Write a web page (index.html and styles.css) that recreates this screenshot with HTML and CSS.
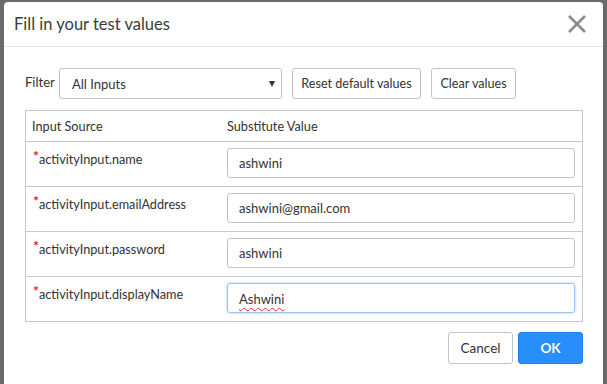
FILE: index.html
```html
<!DOCTYPE html>
<html>
<head>
<meta charset="utf-8">
<link rel="stylesheet" href="styles.css">
</head>
<body>
<div class="modal">
  <div class="modal-header">
    <h1 class="modal-title">Fill in your test values</h1>
    <button class="close" aria-label="Close">
      <svg width="20" height="20" viewBox="0 0 20 20"><path d="M2 2 L18 18 M18 2 L2 18" stroke="#8c8c8c" stroke-width="2.6" fill="none"/></svg>
    </button>
  </div>
  <div class="modal-body">
    <div class="filter-row">
      <label class="filter-label">Filter</label>
      <div class="select-wrap">
        <select class="select"><option>All Inputs</option></select>
      </div>
      <button class="btn btn-reset">Reset default values</button>
      <button class="btn btn-clear">Clear values</button>
    </div>
    <table class="values">
      <thead>
        <tr><th class="col-src">Input Source</th><th>Substitute Value</th></tr>
      </thead>
      <tbody>
        <tr><td class="src"><span class="req">*</span>activityInput.name</td><td class="val"><input class="field" value="ashwini"></td></tr>
        <tr><td class="src"><span class="req">*</span>activityInput.emailAddress</td><td class="val"><input class="field" value="ashwini@gmail.com"></td></tr>
        <tr><td class="src"><span class="req">*</span>activityInput.password</td><td class="val"><input class="field" value="ashwini"></td></tr>
        <tr><td class="src"><span class="req">*</span>activityInput.displayName</td><td class="val"><div class="field focused"><span class="misspelled">Ashwini</span></div></td></tr>
      </tbody>
    </table>
    <div class="footer">
      <button class="btn btn-footer">Cancel</button>
      <button class="btn btn-footer btn-primary">OK</button>
    </div>
  </div>
</div>
</body>
</html>
```
FILE: styles.css
```css
html, body {
  margin: 0;
  padding: 0;
}
body {
  width: 607px;
  height: 384px;
  overflow: hidden;
  background: #6a6a6a;
  font-family: Lato, "Liberation Sans", sans-serif;
  color: #333;
}
.modal {
  margin: 2px 4px 0 4px;
  background: #fff;
  border-radius: 4px;
  height: 400px;
}
.modal-header {
  height: 44px;
  border-bottom: 1px solid #e5e5e5;
  display: flex;
  align-items: center;
  justify-content: space-between;
  padding: 0 16px 0 10px;
}
.modal-title {
  margin: 0;
  font-size: 16.5px;
  font-weight: normal;
  color: #3c3c3c;
}
.close {
  border: 0;
  background: none;
  padding: 0;
  width: 20px;
  height: 20px;
  display: flex;
}
.modal-body {
  padding: 21px 20px 0 21px;
}
.filter-row {
  display: flex;
  align-items: center;
  height: 31px;
}
.filter-label {
  font-size: 13px;
  width: 34px;
  color: #333;
  margin-bottom: 3px;
}
.select-wrap {
  position: relative;
  width: 223px;
  height: 31px;
  margin-right: 10px;
}
.select-wrap::after {
  content: "";
  position: absolute;
  right: 7px;
  top: 13px;
  border-left: 3.5px solid transparent;
  border-right: 3.5px solid transparent;
  border-top: 6px solid #333;
}
.select {
  appearance: none;
  -webkit-appearance: none;
  width: 100%;
  height: 100%;
  border: 1px solid #c4c4c4;
  border-radius: 3px;
  background: #fff;
  font-family: inherit;
  font-size: 13px;
  color: #333;
  padding: 0 12px;
  box-sizing: border-box;
}
.btn {
  height: 31px;
  border: 1px solid #c4c4c4;
  border-radius: 3px;
  background: #fff;
  font-family: inherit;
  font-size: 12.6px;
  color: #333;
  padding: 0;
  margin-right: 10px;
}
.btn-reset {
  width: 129px;
}
.btn-clear {
  width: 85px;
}
.values {
  margin-top: 11px;
  width: 558px;
  border-collapse: collapse;
  border: 1px solid #c8c8c8;
  font-size: 12.7px;
}
.values th {
  text-align: left;
  font-weight: normal;
  height: 30px;
  padding: 0 0 0 6px;
  border-bottom: 1px solid #c8c8c8;
}
.col-src {
  width: 189px;
}
.values td {
  border-bottom: 1px solid #c8c8c8;
  vertical-align: top;
}
.src {
  padding: 9px 6px 0 6px;
}
.val {
  padding: 6px 6px 8px 6px;
}
.req {
  color: #e01c1c;
  font-size: 14px;
  font-weight: bold;
  line-height: 10px;
  vertical-align: 3px;
  margin-left: 1px;
}
.field {
  display: block;
  margin: 0;
  width: 348px;
  height: 30px;
  box-sizing: border-box;
  border: 1px solid #c4c4c4;
  border-radius: 3px;
  padding: 0 11px;
  font-family: inherit;
  font-size: 13px;
  color: #333;
  line-height: 28px;
  background: #fff;
}
.focused {
  border-color: #9ec3ee;
  box-shadow: 0 0 3px rgba(102, 160, 230, 0.55);
  padding-top: 1px;
}
.misspelled {
  text-decoration: underline wavy #e03030;
  text-decoration-thickness: 1px;
  text-underline-offset: 3px;
}
.footer {
  display: flex;
  justify-content: flex-end;
  margin-top: 10px;
  gap: 5px;
}
.btn-footer {
  width: 65px;
  height: 32px;
  margin: 0;
  font-size: 13.5px;
}
.btn-primary {
  background: #278efc;
  border-color: #1f83ee;
  color: #fff;
  font-weight: bold;
}
```
